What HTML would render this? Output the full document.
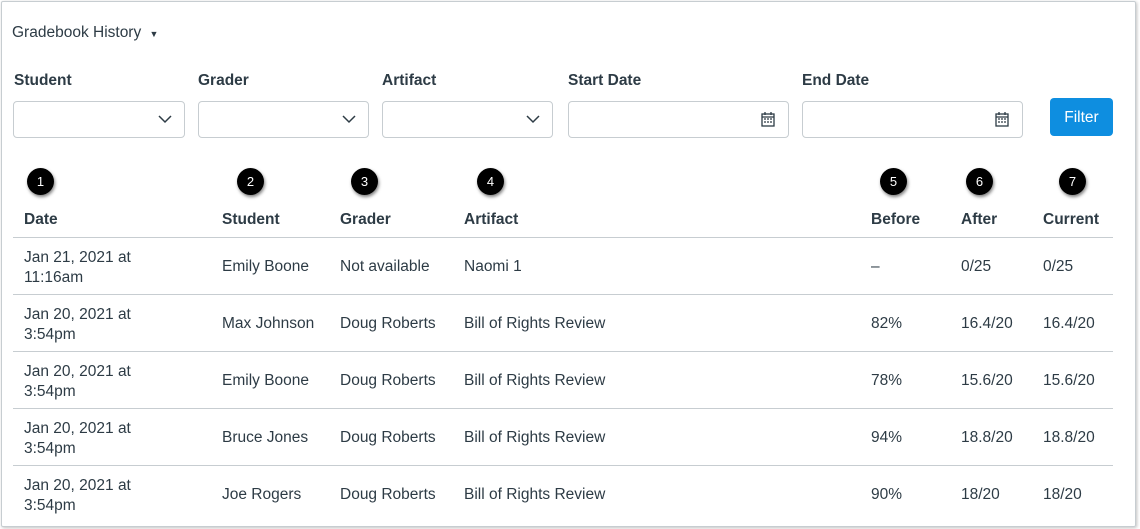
<!DOCTYPE html><html><head><style>
body{margin:0;width:1140px;height:529px;background:#fff;font-family:"Liberation Sans",sans-serif;color:#2d3b45;position:relative;overflow:hidden}
.a{position:absolute;white-space:nowrap}
.frame{position:absolute;left:1px;top:1px;width:1133px;height:524px;border:1px solid #c7cdd1;border-radius:2px;box-shadow:1px 1px 3px rgba(0,0,0,.25)}
.lbl{font-weight:bold;font-size:15.5px}
.in{position:absolute;top:101px;height:37px;border:1px solid #c7cdd1;border-radius:4px;box-sizing:border-box}
.b{position:absolute;width:27px;height:27px;border-radius:50%;background:#000;color:#fff;font-size:13px;text-align:center;line-height:27px;box-shadow:1px 2px 3px rgba(0,0,0,.5)}
.h{font-weight:bold;font-size:15.5px;top:210px}
.line{position:absolute;left:13px;width:1100px;height:1px;background:#c7cdd1}
.c{font-size:15.5px}
</style></head><body>
<div class="frame"></div>
<div class="a" style="left:12px;top:24px;font-size:15.5px">Gradebook History <span style="font-size:9px;margin-left:4px">▼</span></div>
<div class="a lbl" style="left:14px;top:72px">Student</div>
<div class="a lbl" style="left:198px;top:72px">Grader</div>
<div class="a lbl" style="left:382px;top:72px">Artifact</div>
<div class="a lbl" style="left:568px;top:72px">Start Date</div>
<div class="a lbl" style="left:802px;top:72px">End Date</div>
<div class="in" style="left:13px;width:172px"><svg style="position:absolute;right:12px;top:13px" width="14" height="9"><path d="M1 1l6 6 6-6" stroke="#2d3b45" fill="none" stroke-width="1.5"/></svg></div>
<div class="in" style="left:198px;width:171px"><svg style="position:absolute;right:12px;top:13px" width="14" height="9"><path d="M1 1l6 6 6-6" stroke="#2d3b45" fill="none" stroke-width="1.5"/></svg></div>
<div class="in" style="left:382px;width:171px"><svg style="position:absolute;right:12px;top:13px" width="14" height="9"><path d="M1 1l6 6 6-6" stroke="#2d3b45" fill="none" stroke-width="1.5"/></svg></div>
<div class="in" style="left:568px;width:221px"><svg style="position:absolute;right:13px;top:10px" width="14" height="15"><rect x="1" y="2" width="12" height="12" fill="none" stroke="#2d3b45" stroke-width="1.3"/><path d="M1 5h12M4 0v3M10 0v3M3 7h2M6 7h2M9 7h2M3 10h2M6 10h2M9 10h2" stroke="#2d3b45" stroke-width="1.3"/></svg></div>
<div class="in" style="left:802px;width:221px"><svg style="position:absolute;right:13px;top:10px" width="14" height="15"><rect x="1" y="2" width="12" height="12" fill="none" stroke="#2d3b45" stroke-width="1.3"/><path d="M1 5h12M4 0v3M10 0v3M3 7h2M6 7h2M9 7h2M3 10h2M6 10h2M9 10h2" stroke="#2d3b45" stroke-width="1.3"/></svg></div>
<div class="a" style="left:1050px;top:98px;width:63px;height:38px;background:#0e8ee0;border-radius:4px;color:#fff;font-size:15.5px;text-align:center;line-height:39px">Filter</div>
<div class="b" style="left:27px;top:168px">1</div><div class="b" style="left:237px;top:168px">2</div><div class="b" style="left:351px;top:168px">3</div><div class="b" style="left:477px;top:168px">4</div><div class="b" style="left:880px;top:168px">5</div><div class="b" style="left:966px;top:168px">6</div><div class="b" style="left:1059px;top:168px">7</div>
<div class="a h" style="left:24px;top:211px">Date</div><div class="a h" style="left:222px;top:211px">Student</div><div class="a h" style="left:340px;top:211px">Grader</div><div class="a h" style="left:464px;top:211px">Artifact</div><div class="a h" style="left:871px;top:211px">Before</div><div class="a h" style="left:961px;top:211px">After</div><div class="a h" style="left:1043px;top:211px">Current</div>
<div class="line" style="top:237px"></div><div class="line" style="top:294px"></div><div class="line" style="top:351px"></div><div class="line" style="top:408px"></div><div class="line" style="top:465px"></div>
<div class="a c" style="left:24px;top:248px;line-height:20px">Jan 21, 2021 at<br>11:16am</div><div class="a c" style="left:222px;top:258px">Emily Boone</div><div class="a c" style="left:340px;top:258px">Not available</div><div class="a c" style="left:464px;top:258px">Naomi 1</div><div class="a c" style="left:871px;top:258px">–</div><div class="a c" style="left:961px;top:258px">0/25</div><div class="a c" style="left:1043px;top:258px">0/25</div>
<div class="a c" style="left:24px;top:305px;line-height:20px">Jan 20, 2021 at<br>3:54pm</div><div class="a c" style="left:222px;top:315px">Max Johnson</div><div class="a c" style="left:340px;top:315px">Doug Roberts</div><div class="a c" style="left:464px;top:315px">Bill of Rights Review</div><div class="a c" style="left:871px;top:315px">82%</div><div class="a c" style="left:961px;top:315px">16.4/20</div><div class="a c" style="left:1043px;top:315px">16.4/20</div>
<div class="a c" style="left:24px;top:362px;line-height:20px">Jan 20, 2021 at<br>3:54pm</div><div class="a c" style="left:222px;top:372px">Emily Boone</div><div class="a c" style="left:340px;top:372px">Doug Roberts</div><div class="a c" style="left:464px;top:372px">Bill of Rights Review</div><div class="a c" style="left:871px;top:372px">78%</div><div class="a c" style="left:961px;top:372px">15.6/20</div><div class="a c" style="left:1043px;top:372px">15.6/20</div>
<div class="a c" style="left:24px;top:419px;line-height:20px">Jan 20, 2021 at<br>3:54pm</div><div class="a c" style="left:222px;top:429px">Bruce Jones</div><div class="a c" style="left:340px;top:429px">Doug Roberts</div><div class="a c" style="left:464px;top:429px">Bill of Rights Review</div><div class="a c" style="left:871px;top:429px">94%</div><div class="a c" style="left:961px;top:429px">18.8/20</div><div class="a c" style="left:1043px;top:429px">18.8/20</div>
<div class="a c" style="left:24px;top:476px;line-height:20px">Jan 20, 2021 at<br>3:54pm</div><div class="a c" style="left:222px;top:486px">Joe Rogers</div><div class="a c" style="left:340px;top:486px">Doug Roberts</div><div class="a c" style="left:464px;top:486px">Bill of Rights Review</div><div class="a c" style="left:871px;top:486px">90%</div><div class="a c" style="left:961px;top:486px">18/20</div><div class="a c" style="left:1043px;top:486px">18/20</div>
</body></html>
